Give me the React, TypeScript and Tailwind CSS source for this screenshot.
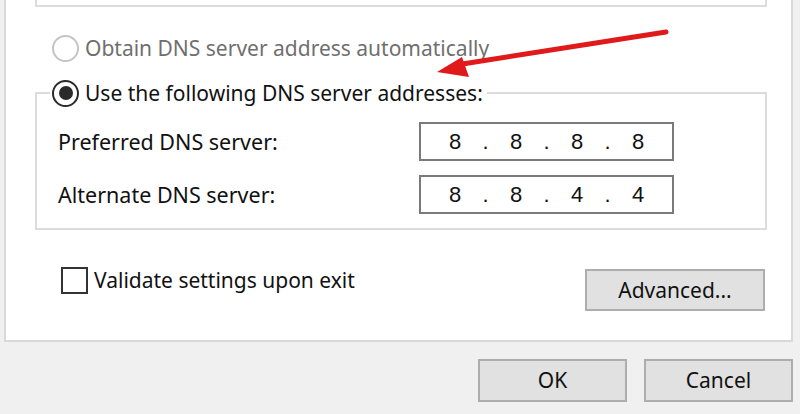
import React from "react";

function IpBox({ parts }: { parts: string[] }) {
  return (
    <div className="w-[255px] h-[39px] border-2 border-[#7a7a7a] bg-white flex items-center pl-[19px] text-[22px] text-[#111] leading-none" style={{ fontFamily: '"Liberation Sans", Arial, sans-serif' }}>
      {parts.map((p, i) => (
        <React.Fragment key={i}>
          <span className="w-[30px] text-center">{p}</span>
          {i < parts.length - 1 && <span className="w-[31px] text-center">.</span>}
        </React.Fragment>
      ))}
    </div>
  );
}

function Button({ label, className }: { label: string; className: string }) {
  return (
    <div className={`bg-[#e1e1e1] border-2 border-[#adadad] flex items-center justify-center text-[21px] text-[#111] ${className}`}>
      {label}
    </div>
  );
}

export default function App() {
  return (
    <div className="relative w-[800px] h-[414px] bg-[#f0f0f0] overflow-hidden text-[21px] leading-none text-[#111]" style={{ fontFamily: '"Noto Sans", "Open Sans", sans-serif' }}>
      <div className="ml-[4px] w-[789px] h-[342px] bg-white border-x-2 border-b-2 border-[#d9d9d9] flex flex-col">
        <div className="ml-[29px] w-[732px] h-[7px] border-x-2 border-b-2 border-[#dcdcdc]" />
        <div className="mt-[26px] ml-[46px] h-[30px] flex items-center">
          <div className="w-[27px] h-[27px] rounded-full border-2 border-[#c4c4c4]" />
          <span className="ml-[6px] text-[#6f6f6f]">Obtain DNS server address automatically</span>
        </div>
        <fieldset className="mt-[15px] ml-[29px] w-[732px] border-2 border-[#dcdcdc] p-0 m-0 pb-[14px]">
          <legend className="ml-[13px] pl-[2px] pr-[4px] h-[30px] flex items-center">
            <div className="w-[27px] h-[27px] rounded-full border-[2.5px] border-[#2a2a2a] flex items-center justify-center">
              <div className="w-[14px] h-[14px] rounded-full bg-[#2a2a2a]" />
            </div>
            <span className="ml-[6px]">Use the following DNS server addresses:</span>
          </legend>
          <div className="mt-[14px] flex items-center pl-[21px]">
            <span className="w-[361px] text-[21.5px]">Preferred DNS server:</span>
            <IpBox parts={["8", "8", "8", "8"]} />
          </div>
          <div className="mt-[14px] flex items-center pl-[21px]">
            <span className="w-[361px] text-[21.5px]">Alternate DNS server:</span>
            <IpBox parts={["8", "8", "4", "4"]} />
          </div>
        </fieldset>
        <div className="mt-[37px] flex items-start justify-between">
          <div className="ml-[55px] h-[27px] flex items-center">
            <div className="w-[27px] h-[27px] border-2 border-[#333]" />
            <span className="ml-[6px]">Validate settings upon exit</span>
          </div>
          <Button label="Advanced..." className="mt-[2px] mr-[26px] w-[180px] h-[42px]" />
        </div>
      </div>
      <div className="mt-[17px] flex justify-end gap-[17px] pr-[7px]">
        <Button label="OK" className="w-[149px] h-[43px]" />
        <Button label="Cancel" className="w-[149px] h-[43px]" />
      </div>
      <svg className="absolute left-0 top-0 pointer-events-none" width="800" height="414" viewBox="0 0 800 414">
        <line x1="666" y1="32" x2="456" y2="65" stroke="#e0191b" strokeWidth="5" strokeLinecap="round" />
        <polygon points="437,72 462,57 469,77" fill="#e0191b" />
      </svg>
    </div>
  );
}
